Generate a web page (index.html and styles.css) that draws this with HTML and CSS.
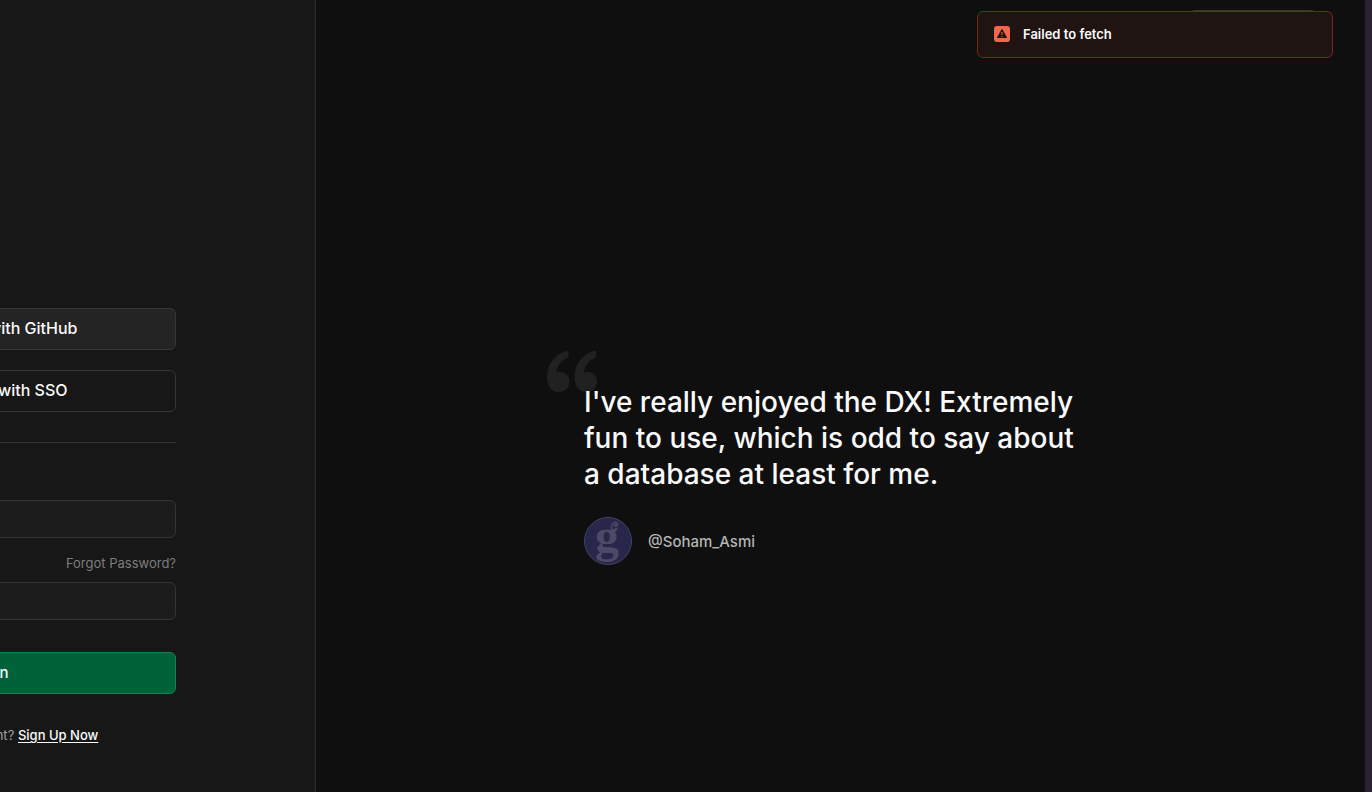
FILE: index.html
```html
<!DOCTYPE html>
<html lang="en">
<head>
  <meta charset="UTF-8">
  <meta name="viewport" content="width=device-width, initial-scale=1.0">
  <title>Sign In</title>
  <link rel="stylesheet" href="styles.css">
</head>
<body>

  <div class="page">
    <aside class="sidebar">
      <form class="form">
        <button type="button" class="btn btn-github">
          <svg class="btn-icon" viewBox="0 0 16 16" aria-hidden="true">
            <path d="M8 0C3.600 0 0 3.600 0 8c0 3.500 2.300 6.500 5.500 7.600.4.100.5-.2.5-.4v-1.500c-2.200.5-2.700-.9-2.700-.9-.4-.9-.9-1.200-.9-1.200-.7-.5.1-.5.1-.5.8.1 1.200.8 1.200.8.700 1.200 1.900.9 2.300.7.100-.5.3-.9.5-1.100-1.800-.2-3.600-.9-3.600-4 0-.9.300-1.600.8-2.100-.1-.2-.4-1 .1-2.100 0 0 .7-.2 2.200.8a7.500 7.500 0 0 1 4 0c1.500-1 2.200-.8 2.200-.8.500 1.100.2 1.900.1 2.100.5.600.8 1.300.8 2.100 0 3.100-1.900 3.700-3.600 3.900.3.300.6.800.6 1.500v2.200c0 .2.100.5.500.4A8 8 0 0 0 8 0Z" fill="currentColor"/>
          </svg>
          Continue with GitHub
        </button>
        <button type="button" class="btn btn-sso">
          <svg class="btn-icon" viewBox="0 0 16 16" fill="none" stroke="currentColor" aria-hidden="true">
            <rect x="2.500" y="7" width="11" height="8" rx="1.500"/>
            <path d="M5 7V4.500a3 3 0 0 1 6 0V7"/>
          </svg>
          Continue with SSO
        </button>
        <hr class="divider">
        <input class="field" type="email" aria-label="Email">
        <a class="forgot" href="#">Forgot Password?</a>
        <input class="field" type="password" aria-label="Password">
        <button type="submit" class="btn btn-green">Sign In</button>
        <p class="signup">Don't have an account? <a href="#">Sign Up Now</a></p>
      </form>
    </aside>

    <main class="content">
      <header class="topbar">
        <button type="button" class="docs" aria-label="Documentation"></button>
      </header>

      <figure class="testimonial">
        <svg class="quote-mark" viewBox="0 0 50 42" aria-hidden="true">
          <path d="M21.500 0.500V7.500C14.500 10 10.500 15 9.500 22.500C17 20.500 22.500 25 22.500 31.500C22.500 37.500 18 42 11.500 42C4.500 42 0 36 0 27.500C0 13.500 8 3.500 21.500 0.500Z"/>
          <path d="M49 0.500V7.500C42 10 38 15 37 22.500C44.500 20.500 50 25 50 31.500C50 37.500 45.500 42 39 42C32 42 27.500 36 27.500 27.500C27.500 13.500 35.500 3.500 49 0.500Z"/>
        </svg>
        <blockquote>I've really enjoyed the DX! Extremely fun to use, which is odd to say about a database at least for me.</blockquote>
        <figcaption>
          <svg class="avatar" viewBox="0 0 48 48" aria-hidden="true">
            <circle cx="24" cy="24" r="23.500" fill="#28264a" stroke="#45445f"/>
            <text x="23" y="35" text-anchor="middle">g</text>
            <path d="M27.500 14C27 8 29 5 32 5.500C34 6 34 8.500 32.500 9" fill="none" stroke="#4c4a66" stroke-width="1.500"/>
            <circle cx="31.500" cy="8.500" r="1.500" fill="#4c4a66"/>
          </svg>
          <cite>@Soham_Asmi</cite>
        </figcaption>
      </figure>
    </main>

    <div class="edge"></div>
  </div>

  <div class="toast" role="alert">
    <svg class="toast-icon" viewBox="0 0 16 16" aria-hidden="true">
      <rect width="16" height="16" rx="3" fill="#f2674c"/>
      <path d="M8 3.500L12.500 11.500H3.500Z" fill="#1f1412" stroke="#1f1412" stroke-linejoin="round"/>
      <path d="M8 6V9M8 10V11" stroke="#f2674c"/>
    </svg>
    <span>Failed to fetch</span>
  </div>

</body>
</html>
```
FILE: styles.css
```css
* {
  box-sizing: border-box;
}

body {
  margin: 0;
  background-color: #0f0f0f;
  color: #fafafa;
  font-family: Inter, sans-serif;
  font-size: 13px;
  overflow: hidden;
}

.page {
  display: flex;
  min-height: 100vh;
}

/* sign in form */
.sidebar {
  flex: 0 0 316px;
  display: flex;
  justify-content: flex-end;
  padding: 308px 139px 0 0;
  background-color: #171717;
  border-right: 1px solid #2e2e2e;
  overflow: hidden;
}

.form {
  flex: 0 0 384px;
  display: flex;
  flex-direction: column;
}

.btn {
  display: flex;
  align-items: center;
  justify-content: center;
  gap: 8px;
  height: 42px;
  padding: 0 16px 2px;
  border: 1px solid #363636;
  border-radius: 6px;
  color: #fafafa;
  font-family: inherit;
  font-size: 16px;
  font-weight: 500;
  cursor: pointer;
}

.btn-icon {
  width: 16px;
  height: 16px;
}

.btn-github {
  margin-bottom: 20px;
  background-color: #242424;
}

.btn-sso {
  background-color: #171717;
}

.btn-green {
  margin-top: 32px;
  background-color: #006239;
  border-color: #128353;
  font-size: 15px;
}

.divider {
  width: 100%;
  height: 1px;
  margin: 30px 0 57px;
  border: none;
  background-color: #343434;
}

.field {
  height: 38px;
  padding: 0 16px;
  background-color: #1c1c1c;
  border: 1px solid #343434;
  border-radius: 6px;
  color: #fafafa;
  font-family: inherit;
  font-size: 14px;
}

.forgot {
  align-self: flex-end;
  margin: 15px 0 9px;
  color: #7d7d7d;
  line-height: 20px;
  text-decoration: none;
}

.signup {
  margin: 31px 0 0;
  color: #a0a0a0;
  line-height: 20px;
  text-align: center;
}

.signup a {
  color: #fafafa;
  font-weight: 500;
  text-underline-offset: 2px;
}

/* testimonial */
.content {
  flex: 1;
  display: flex;
  flex-direction: column;
  align-items: center;
}

.topbar {
  align-self: stretch;
  display: flex;
  justify-content: flex-end;
  padding: 10px 48px 0 0;
}

.docs {
  width: 128px;
  height: 38px;
  background-color: #242424;
  border: 1px solid #363636;
  border-radius: 6px;
}

.testimonial {
  position: relative;
  width: 100%;
  max-width: 513px;
  margin: 336px 0 0;
}

.quote-mark {
  position: absolute;
  top: -34px;
  left: -37px;
  width: 50px;
  fill: #212121;
}

blockquote {
  position: relative;
  margin: 0 0 25px;
  padding-right: 16px;
  font-size: 28px;
  font-weight: 500;
  line-height: 36px;
}

figcaption {
  display: flex;
  align-items: center;
  gap: 16px;
}

.avatar {
  width: 48px;
  height: 48px;
}

.avatar text {
  fill: #4c4a66;
  font-family: "Liberation Serif", serif;
  font-size: 48px;
  font-weight: 700;
}

cite {
  color: #b4b4b4;
  font-size: 15px;
  font-style: normal;
  font-weight: 500;
}

.edge {
  flex: 0 0 7px;
  background-color: #2d2031;
}

/* error message */
.toast {
  position: absolute;
  top: 11px;
  right: 39px;
  display: flex;
  align-items: center;
  gap: 13px;
  width: 356px;
  height: 47px;
  padding: 0 16px 2px;
  background-color: #1f1412;
  border: 1px solid #7b2418;
  border-radius: 6px;
  font-weight: 600;
}

.toast-icon {
  width: 16px;
  height: 16px;
}
```
